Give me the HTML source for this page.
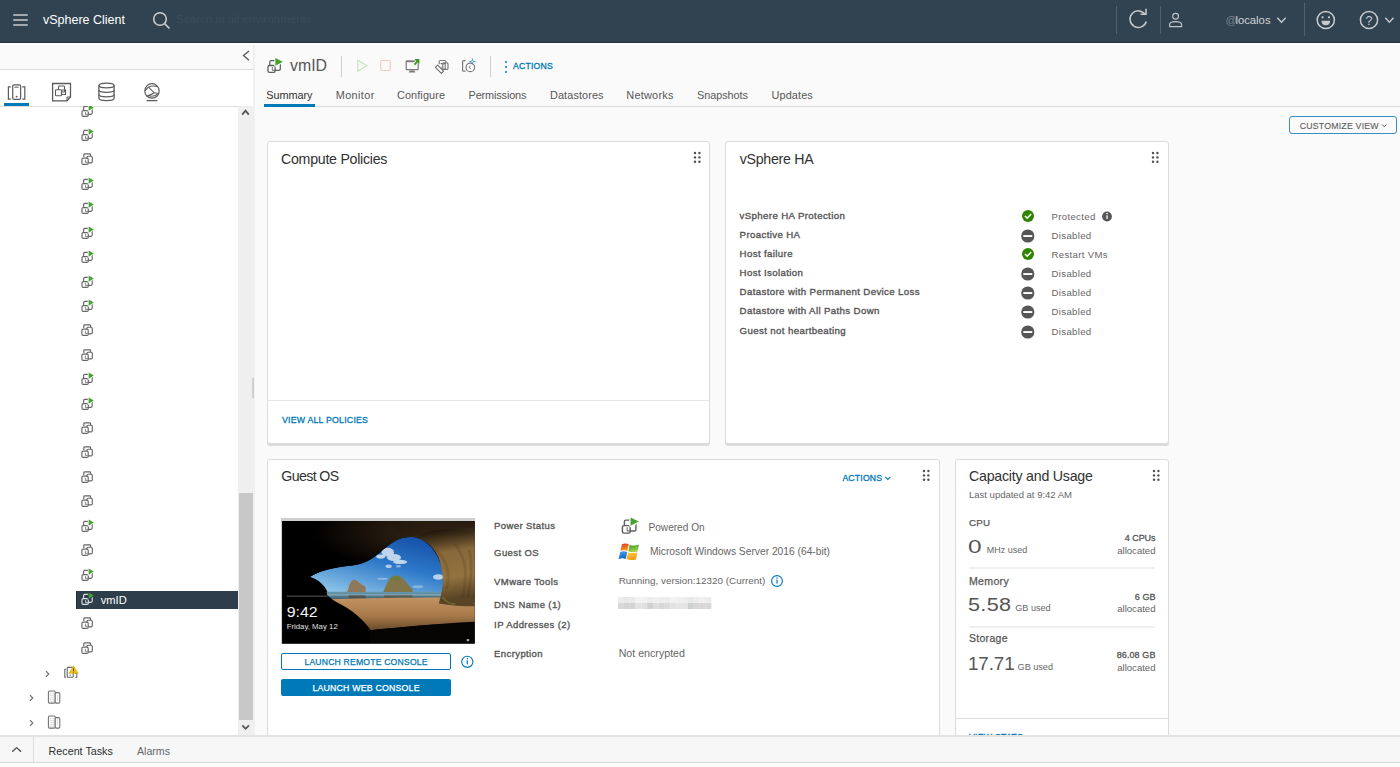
<!DOCTYPE html><html><head><meta charset="utf-8"><style>
html,body{margin:0;padding:0;}
body{width:1400px;height:767px;overflow:hidden;position:relative;background:#fafafa;font-family:"Liberation Sans", sans-serif;}
.t{position:absolute;white-space:nowrap;line-height:normal;}
.card{position:absolute;background:#fff;border:1px solid #dcdcdc;border-radius:3px;box-shadow:0 2px 0 #dcdcdc;box-sizing:border-box;}
svg{overflow:visible}
</style></head><body>
<div style="position:absolute;left:0px;top:0px;width:1400px;height:42px;background:#314351"></div>
<div style="position:absolute;left:0px;top:42px;width:1400px;height:1px;background:#24323d"></div>
<div style="position:absolute;left:0px;top:43px;width:1400px;height:2px;background:#ffffff"></div>
<div style="position:absolute;left:13.3px;top:14.1px;width:14.7px;height:1.8px;background:#a3a9ae;border-radius:1px"></div>
<div style="position:absolute;left:13.3px;top:19px;width:14.7px;height:1.8px;background:#a3a9ae;border-radius:1px"></div>
<div style="position:absolute;left:13.3px;top:23.9px;width:14.7px;height:1.8px;background:#a3a9ae;border-radius:1px"></div>
<div class="t" style="left:43px;top:12.69px;font-size:12.5px;color:#ffffff;font-weight:400;">vSphere Client</div>
<svg style="position:absolute;left:150px;top:10px;" width="24" height="24" viewBox="150 10 24 24"><circle cx="160" cy="19" r="6.3" fill="none" stroke="#c7cbce" stroke-width="1.6"/><line x1="164.6" y1="23.6" x2="169.5" y2="28.5" stroke="#c7cbce" stroke-width="1.7"/></svg>
<div class="t" style="left:176px;top:12.79px;font-size:11.5px;color:#3b4b57;font-weight:400;">Search in all environments</div>
<div style="position:absolute;left:1116px;top:6px;width:1px;height:28px;background:#51616d"></div>
<div style="position:absolute;left:1160px;top:6px;width:1px;height:28px;background:#51616d"></div>
<div style="position:absolute;left:1303.5px;top:3px;width:1px;height:33px;background:#51616d"></div>
<svg style="position:absolute;left:1126px;top:8px;" width="24" height="24" viewBox="1126 8 24 24"><path d="M1145.2 14.5 A8.3 8.3 0 1 0 1146.3 21.5" fill="none" stroke="#c7cbce" stroke-width="1.5"/><path d="M1140.5 14.2 L1146 14.2 L1146 8.8" fill="none" stroke="#c7cbce" stroke-width="1.5"/></svg>
<svg style="position:absolute;left:1166px;top:10px;" width="20" height="20" viewBox="1166 10 20 20"><circle cx="1175.6" cy="16.2" r="2.9" fill="none" stroke="#c0c5c9" stroke-width="1.15"/><path d="M1169.6 26.6 L1169.6 24.6 Q1169.6 21.6 1175.6 21.6 Q1181.6 21.6 1181.6 24.6 L1181.6 26.6 Z" fill="none" stroke="#c0c5c9" stroke-width="1.15" stroke-linejoin="round"/></svg>
<div class="t" style="left:1225.5px;top:13.97px;font-size:11.3px;color:#d0d4d8;font-weight:400;"><span style="color:#74818b;letter-spacing:-1.6px">@</span>localos</div>
<svg style="position:absolute;left:1276px;top:15px;" width="12" height="10" viewBox="1276 15 12 10"><path d="M1277.3 17.8 L1281.5 22.2 L1285.7 17.8" fill="none" stroke="#c7cbce" stroke-width="1.4"/></svg>
<svg style="position:absolute;left:1314px;top:8px;" width="24" height="24" viewBox="1314 8 24 24"><circle cx="1325.8" cy="20" r="8.6" fill="none" stroke="#c7cbce" stroke-width="1.5"/><circle cx="1322.6" cy="17.3" r="1.1" fill="#c7cbce"/><circle cx="1329" cy="17.3" r="1.1" fill="#c7cbce"/><path d="M1321.5 20.8 L1330.1 20.8 Q1330 25.3 1325.8 25.3 Q1321.6 25.3 1321.5 20.8 Z" fill="#c7cbce"/></svg>
<svg style="position:absolute;left:1357px;top:8px;" width="40" height="24" viewBox="1357 8 40 24"><circle cx="1369" cy="20" r="8.6" fill="none" stroke="#c7cbce" stroke-width="1.5"/><text x="1369" y="24.6" font-size="12.5" text-anchor="middle" fill="#c7cbce" font-family="Liberation Sans">?</text><path d="M1385.3 17.8 L1389.4 22.2 L1393.5 17.8" fill="none" stroke="#c7cbce" stroke-width="1.4"/></svg>
<div style="position:absolute;left:0px;top:45px;width:253px;height:24px;background:#fafafa"></div>
<svg style="position:absolute;left:240px;top:48px;" width="12" height="16" viewBox="240 48 12 16"><path d="M249 51 L243.5 55.6 L249 60.2" fill="none" stroke="#555" stroke-width="1.3"/></svg>
<div style="position:absolute;left:0px;top:69px;width:253px;height:1px;background:#dddddd"></div>
<div style="position:absolute;left:0px;top:70px;width:253px;height:665px;background:#ffffff"></div>
<svg style="position:absolute;left:5px;top:81px;" width="24" height="22" viewBox="5 81 24 22"><rect x="12.7" y="84.8" width="7.9" height="14.5" rx="1.3" fill="none" stroke="#5b5b5b" stroke-width="1.2"/><path d="M14.4 87.2 L18.6 87.2" stroke="#5b5b5b" stroke-width="1"/><circle cx="16.6" cy="96.6" r="0.95" fill="#5b5b5b"/><path d="M10.8 86.9 L8.4 86.9 L8.4 99.2 L10.8 99.2 M22.3 86.9 L24.8 86.9 L24.8 99.2 L22.3 99.2" fill="none" stroke="#5b5b5b" stroke-width="1.2"/></svg>
<svg style="position:absolute;left:50px;top:81px;" width="24" height="22" viewBox="50 81 24 22"><path d="M52.6 83.5 L70.5 83.5 L70.5 97 L67 100.8 L52.6 100.8 Z" fill="none" stroke="#5b5b5b" stroke-width="1.3"/><path d="M67 100.8 L67 97 L70.5 97" fill="none" stroke="#5b5b5b" stroke-width="1"/><rect x="58.5" y="86" width="6" height="6" rx="0.8" fill="none" stroke="#5b5b5b" stroke-width="1.1"/><rect x="55.5" y="89.8" width="6" height="6" rx="0.8" fill="#fff" stroke="#5b5b5b" stroke-width="1.1"/><path d="M62 90 L65.5 90 L65.5 94.5 L61.5 94.5" fill="none" stroke="#5b5b5b" stroke-width="1.1"/></svg>
<svg style="position:absolute;left:96px;top:81px;" width="22" height="22" viewBox="96 81 22 22"><ellipse cx="106.5" cy="85.5" rx="7.6" ry="2.3" fill="none" stroke="#5b5b5b" stroke-width="1.3"/><path d="M98.9 85.5 L98.9 98.3 Q98.9 100.6 106.5 100.6 Q114.1 100.6 114.1 98.3 L114.1 85.5" fill="none" stroke="#5b5b5b" stroke-width="1.3"/><path d="M98.9 90 Q98.9 92.3 106.5 92.3 Q114.1 92.3 114.1 90 M98.9 94.5 Q98.9 96.8 106.5 96.8 Q114.1 96.8 114.1 94.5" fill="none" stroke="#5b5b5b" stroke-width="1.2"/></svg>
<svg style="position:absolute;left:142px;top:81px;" width="22" height="22" viewBox="142 81 22 22"><circle cx="152" cy="90.9" r="7.2" fill="none" stroke="#5b5b5b" stroke-width="1.2"/><path d="M148.4 87.2 L154.4 92.8 L158.8 93.5 M148.4 87.2 Q152.6 85 157.2 86.6 M148.4 87.2 L145.2 90.6 M154.4 92.8 Q151.4 94.8 148.2 95.4 L146.4 96.4 M148.2 95.4 Q153.6 97.6 158.4 93.6" fill="none" stroke="#5b5b5b" stroke-width="1.05"/><line x1="146.6" y1="100.6" x2="157.3" y2="100.6" stroke="#5b5b5b" stroke-width="1.3"/></svg>
<div style="position:absolute;left:3.5px;top:103px;width:25.5px;height:2.6px;background:#0079b8"></div>
<div style="position:absolute;left:0px;top:105.5px;width:239px;height:1px;background:#dddddd"></div>
<div style="position:absolute;left:0;top:106px;width:239px;height:629px;overflow:hidden">
<div style="position:absolute;left:0;top:-106px;width:239px;height:767px">
<svg style="position:absolute;left:81px;top:103.7px;" width="14" height="14" viewBox="0 0 14 14"><rect x="2.6" y="2.4" width="8.6" height="7.9" rx="1.2" fill="none" stroke="#666666" stroke-width="1.15"/><rect x="1.0" y="6.6" width="6.3" height="5.8" rx="1.2" fill="#ffffff" stroke="#666666" stroke-width="1.15"/><path d="M4.6 8 L4.6 10.6 L7 10.6" fill="none" stroke="#666666" stroke-width="0.8"/><path d="M7.6 0.5 L12.8 3.4 L7.6 6.7 Z" fill="#ffffff" stroke="#ffffff" stroke-width="1.6" stroke-linejoin="round"/><path d="M7.6 0.5 L12.8 3.4 L7.6 6.7 Z" fill="#45a22f"/></svg>
<svg style="position:absolute;left:81px;top:128.12px;" width="14" height="14" viewBox="0 0 14 14"><rect x="2.6" y="2.4" width="8.6" height="7.9" rx="1.2" fill="none" stroke="#666666" stroke-width="1.15"/><rect x="1.0" y="6.6" width="6.3" height="5.8" rx="1.2" fill="#ffffff" stroke="#666666" stroke-width="1.15"/><path d="M4.6 8 L4.6 10.6 L7 10.6" fill="none" stroke="#666666" stroke-width="0.8"/><path d="M7.6 0.5 L12.8 3.4 L7.6 6.7 Z" fill="#ffffff" stroke="#ffffff" stroke-width="1.6" stroke-linejoin="round"/><path d="M7.6 0.5 L12.8 3.4 L7.6 6.7 Z" fill="#45a22f"/></svg>
<svg style="position:absolute;left:81px;top:152.14000000000001px;" width="14" height="14" viewBox="0 0 14 14"><path d="M2.8 5 L2.8 2.8 Q2.8 1.9 3.7 1.9 L8.8 1.9 Q9.6 1.9 9.6 2.8 L9.6 4" fill="none" stroke="#666666" stroke-width="1.15"/><rect x="5.9" y="4.2" width="5.4" height="6.7" rx="1.2" fill="#ffffff" stroke="#666666" stroke-width="1.15"/><rect x="0.9" y="6.1" width="6.3" height="6.3" rx="1.2" fill="#ffffff" stroke="#666666" stroke-width="1.15"/><path d="M4.4 7.8 L4.4 10.4 L6.6 10.4" fill="none" stroke="#666666" stroke-width="0.8"/></svg>
<svg style="position:absolute;left:81px;top:176.95999999999998px;" width="14" height="14" viewBox="0 0 14 14"><rect x="2.6" y="2.4" width="8.6" height="7.9" rx="1.2" fill="none" stroke="#666666" stroke-width="1.15"/><rect x="1.0" y="6.6" width="6.3" height="5.8" rx="1.2" fill="#ffffff" stroke="#666666" stroke-width="1.15"/><path d="M4.6 8 L4.6 10.6 L7 10.6" fill="none" stroke="#666666" stroke-width="0.8"/><path d="M7.6 0.5 L12.8 3.4 L7.6 6.7 Z" fill="#ffffff" stroke="#ffffff" stroke-width="1.6" stroke-linejoin="round"/><path d="M7.6 0.5 L12.8 3.4 L7.6 6.7 Z" fill="#45a22f"/></svg>
<svg style="position:absolute;left:81px;top:201.38px;" width="14" height="14" viewBox="0 0 14 14"><rect x="2.6" y="2.4" width="8.6" height="7.9" rx="1.2" fill="none" stroke="#666666" stroke-width="1.15"/><rect x="1.0" y="6.6" width="6.3" height="5.8" rx="1.2" fill="#ffffff" stroke="#666666" stroke-width="1.15"/><path d="M4.6 8 L4.6 10.6 L7 10.6" fill="none" stroke="#666666" stroke-width="0.8"/><path d="M7.6 0.5 L12.8 3.4 L7.6 6.7 Z" fill="#ffffff" stroke="#ffffff" stroke-width="1.6" stroke-linejoin="round"/><path d="M7.6 0.5 L12.8 3.4 L7.6 6.7 Z" fill="#45a22f"/></svg>
<svg style="position:absolute;left:81px;top:225.8px;" width="14" height="14" viewBox="0 0 14 14"><rect x="2.6" y="2.4" width="8.6" height="7.9" rx="1.2" fill="none" stroke="#666666" stroke-width="1.15"/><rect x="1.0" y="6.6" width="6.3" height="5.8" rx="1.2" fill="#ffffff" stroke="#666666" stroke-width="1.15"/><path d="M4.6 8 L4.6 10.6 L7 10.6" fill="none" stroke="#666666" stroke-width="0.8"/><path d="M7.6 0.5 L12.8 3.4 L7.6 6.7 Z" fill="#ffffff" stroke="#ffffff" stroke-width="1.6" stroke-linejoin="round"/><path d="M7.6 0.5 L12.8 3.4 L7.6 6.7 Z" fill="#45a22f"/></svg>
<svg style="position:absolute;left:81px;top:250.21999999999997px;" width="14" height="14" viewBox="0 0 14 14"><rect x="2.6" y="2.4" width="8.6" height="7.9" rx="1.2" fill="none" stroke="#666666" stroke-width="1.15"/><rect x="1.0" y="6.6" width="6.3" height="5.8" rx="1.2" fill="#ffffff" stroke="#666666" stroke-width="1.15"/><path d="M4.6 8 L4.6 10.6 L7 10.6" fill="none" stroke="#666666" stroke-width="0.8"/><path d="M7.6 0.5 L12.8 3.4 L7.6 6.7 Z" fill="#ffffff" stroke="#ffffff" stroke-width="1.6" stroke-linejoin="round"/><path d="M7.6 0.5 L12.8 3.4 L7.6 6.7 Z" fill="#45a22f"/></svg>
<svg style="position:absolute;left:81px;top:274.64px;" width="14" height="14" viewBox="0 0 14 14"><rect x="2.6" y="2.4" width="8.6" height="7.9" rx="1.2" fill="none" stroke="#666666" stroke-width="1.15"/><rect x="1.0" y="6.6" width="6.3" height="5.8" rx="1.2" fill="#ffffff" stroke="#666666" stroke-width="1.15"/><path d="M4.6 8 L4.6 10.6 L7 10.6" fill="none" stroke="#666666" stroke-width="0.8"/><path d="M7.6 0.5 L12.8 3.4 L7.6 6.7 Z" fill="#ffffff" stroke="#ffffff" stroke-width="1.6" stroke-linejoin="round"/><path d="M7.6 0.5 L12.8 3.4 L7.6 6.7 Z" fill="#45a22f"/></svg>
<svg style="position:absolute;left:81px;top:299.06px;" width="14" height="14" viewBox="0 0 14 14"><rect x="2.6" y="2.4" width="8.6" height="7.9" rx="1.2" fill="none" stroke="#666666" stroke-width="1.15"/><rect x="1.0" y="6.6" width="6.3" height="5.8" rx="1.2" fill="#ffffff" stroke="#666666" stroke-width="1.15"/><path d="M4.6 8 L4.6 10.6 L7 10.6" fill="none" stroke="#666666" stroke-width="0.8"/><path d="M7.6 0.5 L12.8 3.4 L7.6 6.7 Z" fill="#ffffff" stroke="#ffffff" stroke-width="1.6" stroke-linejoin="round"/><path d="M7.6 0.5 L12.8 3.4 L7.6 6.7 Z" fill="#45a22f"/></svg>
<svg style="position:absolute;left:81px;top:323.08000000000004px;" width="14" height="14" viewBox="0 0 14 14"><path d="M2.8 5 L2.8 2.8 Q2.8 1.9 3.7 1.9 L8.8 1.9 Q9.6 1.9 9.6 2.8 L9.6 4" fill="none" stroke="#666666" stroke-width="1.15"/><rect x="5.9" y="4.2" width="5.4" height="6.7" rx="1.2" fill="#ffffff" stroke="#666666" stroke-width="1.15"/><rect x="0.9" y="6.1" width="6.3" height="6.3" rx="1.2" fill="#ffffff" stroke="#666666" stroke-width="1.15"/><path d="M4.4 7.8 L4.4 10.4 L6.6 10.4" fill="none" stroke="#666666" stroke-width="0.8"/></svg>
<svg style="position:absolute;left:81px;top:347.50000000000006px;" width="14" height="14" viewBox="0 0 14 14"><path d="M2.8 5 L2.8 2.8 Q2.8 1.9 3.7 1.9 L8.8 1.9 Q9.6 1.9 9.6 2.8 L9.6 4" fill="none" stroke="#666666" stroke-width="1.15"/><rect x="5.9" y="4.2" width="5.4" height="6.7" rx="1.2" fill="#ffffff" stroke="#666666" stroke-width="1.15"/><rect x="0.9" y="6.1" width="6.3" height="6.3" rx="1.2" fill="#ffffff" stroke="#666666" stroke-width="1.15"/><path d="M4.4 7.8 L4.4 10.4 L6.6 10.4" fill="none" stroke="#666666" stroke-width="0.8"/></svg>
<svg style="position:absolute;left:81px;top:372.32px;" width="14" height="14" viewBox="0 0 14 14"><rect x="2.6" y="2.4" width="8.6" height="7.9" rx="1.2" fill="none" stroke="#666666" stroke-width="1.15"/><rect x="1.0" y="6.6" width="6.3" height="5.8" rx="1.2" fill="#ffffff" stroke="#666666" stroke-width="1.15"/><path d="M4.6 8 L4.6 10.6 L7 10.6" fill="none" stroke="#666666" stroke-width="0.8"/><path d="M7.6 0.5 L12.8 3.4 L7.6 6.7 Z" fill="#ffffff" stroke="#ffffff" stroke-width="1.6" stroke-linejoin="round"/><path d="M7.6 0.5 L12.8 3.4 L7.6 6.7 Z" fill="#45a22f"/></svg>
<svg style="position:absolute;left:81px;top:396.74px;" width="14" height="14" viewBox="0 0 14 14"><rect x="2.6" y="2.4" width="8.6" height="7.9" rx="1.2" fill="none" stroke="#666666" stroke-width="1.15"/><rect x="1.0" y="6.6" width="6.3" height="5.8" rx="1.2" fill="#ffffff" stroke="#666666" stroke-width="1.15"/><path d="M4.6 8 L4.6 10.6 L7 10.6" fill="none" stroke="#666666" stroke-width="0.8"/><path d="M7.6 0.5 L12.8 3.4 L7.6 6.7 Z" fill="#ffffff" stroke="#ffffff" stroke-width="1.6" stroke-linejoin="round"/><path d="M7.6 0.5 L12.8 3.4 L7.6 6.7 Z" fill="#45a22f"/></svg>
<svg style="position:absolute;left:81px;top:420.76000000000005px;" width="14" height="14" viewBox="0 0 14 14"><path d="M2.8 5 L2.8 2.8 Q2.8 1.9 3.7 1.9 L8.8 1.9 Q9.6 1.9 9.6 2.8 L9.6 4" fill="none" stroke="#666666" stroke-width="1.15"/><rect x="5.9" y="4.2" width="5.4" height="6.7" rx="1.2" fill="#ffffff" stroke="#666666" stroke-width="1.15"/><rect x="0.9" y="6.1" width="6.3" height="6.3" rx="1.2" fill="#ffffff" stroke="#666666" stroke-width="1.15"/><path d="M4.4 7.8 L4.4 10.4 L6.6 10.4" fill="none" stroke="#666666" stroke-width="0.8"/></svg>
<svg style="position:absolute;left:81px;top:445.18px;" width="14" height="14" viewBox="0 0 14 14"><path d="M2.8 5 L2.8 2.8 Q2.8 1.9 3.7 1.9 L8.8 1.9 Q9.6 1.9 9.6 2.8 L9.6 4" fill="none" stroke="#666666" stroke-width="1.15"/><rect x="5.9" y="4.2" width="5.4" height="6.7" rx="1.2" fill="#ffffff" stroke="#666666" stroke-width="1.15"/><rect x="0.9" y="6.1" width="6.3" height="6.3" rx="1.2" fill="#ffffff" stroke="#666666" stroke-width="1.15"/><path d="M4.4 7.8 L4.4 10.4 L6.6 10.4" fill="none" stroke="#666666" stroke-width="0.8"/></svg>
<svg style="position:absolute;left:81px;top:469.6px;" width="14" height="14" viewBox="0 0 14 14"><path d="M2.8 5 L2.8 2.8 Q2.8 1.9 3.7 1.9 L8.8 1.9 Q9.6 1.9 9.6 2.8 L9.6 4" fill="none" stroke="#666666" stroke-width="1.15"/><rect x="5.9" y="4.2" width="5.4" height="6.7" rx="1.2" fill="#ffffff" stroke="#666666" stroke-width="1.15"/><rect x="0.9" y="6.1" width="6.3" height="6.3" rx="1.2" fill="#ffffff" stroke="#666666" stroke-width="1.15"/><path d="M4.4 7.8 L4.4 10.4 L6.6 10.4" fill="none" stroke="#666666" stroke-width="0.8"/></svg>
<svg style="position:absolute;left:81px;top:494.02000000000004px;" width="14" height="14" viewBox="0 0 14 14"><path d="M2.8 5 L2.8 2.8 Q2.8 1.9 3.7 1.9 L8.8 1.9 Q9.6 1.9 9.6 2.8 L9.6 4" fill="none" stroke="#666666" stroke-width="1.15"/><rect x="5.9" y="4.2" width="5.4" height="6.7" rx="1.2" fill="#ffffff" stroke="#666666" stroke-width="1.15"/><rect x="0.9" y="6.1" width="6.3" height="6.3" rx="1.2" fill="#ffffff" stroke="#666666" stroke-width="1.15"/><path d="M4.4 7.8 L4.4 10.4 L6.6 10.4" fill="none" stroke="#666666" stroke-width="0.8"/></svg>
<svg style="position:absolute;left:81px;top:518.8400000000001px;" width="14" height="14" viewBox="0 0 14 14"><rect x="2.6" y="2.4" width="8.6" height="7.9" rx="1.2" fill="none" stroke="#666666" stroke-width="1.15"/><rect x="1.0" y="6.6" width="6.3" height="5.8" rx="1.2" fill="#ffffff" stroke="#666666" stroke-width="1.15"/><path d="M4.6 8 L4.6 10.6 L7 10.6" fill="none" stroke="#666666" stroke-width="0.8"/><path d="M7.6 0.5 L12.8 3.4 L7.6 6.7 Z" fill="#ffffff" stroke="#ffffff" stroke-width="1.6" stroke-linejoin="round"/><path d="M7.6 0.5 L12.8 3.4 L7.6 6.7 Z" fill="#45a22f"/></svg>
<svg style="position:absolute;left:81px;top:542.86px;" width="14" height="14" viewBox="0 0 14 14"><path d="M2.8 5 L2.8 2.8 Q2.8 1.9 3.7 1.9 L8.8 1.9 Q9.6 1.9 9.6 2.8 L9.6 4" fill="none" stroke="#666666" stroke-width="1.15"/><rect x="5.9" y="4.2" width="5.4" height="6.7" rx="1.2" fill="#ffffff" stroke="#666666" stroke-width="1.15"/><rect x="0.9" y="6.1" width="6.3" height="6.3" rx="1.2" fill="#ffffff" stroke="#666666" stroke-width="1.15"/><path d="M4.4 7.8 L4.4 10.4 L6.6 10.4" fill="none" stroke="#666666" stroke-width="0.8"/></svg>
<svg style="position:absolute;left:81px;top:567.6800000000001px;" width="14" height="14" viewBox="0 0 14 14"><rect x="2.6" y="2.4" width="8.6" height="7.9" rx="1.2" fill="none" stroke="#666666" stroke-width="1.15"/><rect x="1.0" y="6.6" width="6.3" height="5.8" rx="1.2" fill="#ffffff" stroke="#666666" stroke-width="1.15"/><path d="M4.6 8 L4.6 10.6 L7 10.6" fill="none" stroke="#666666" stroke-width="0.8"/><path d="M7.6 0.5 L12.8 3.4 L7.6 6.7 Z" fill="#ffffff" stroke="#ffffff" stroke-width="1.6" stroke-linejoin="round"/><path d="M7.6 0.5 L12.8 3.4 L7.6 6.7 Z" fill="#45a22f"/></svg>
<div style="position:absolute;left:76.25px;top:591.4000000000001px;width:162px;height:17.8px;background:#2e3f4b;box-shadow:inset 1px 0 0 #1f2e38"></div>
<svg style="position:absolute;left:81px;top:592.1000000000001px;" width="14" height="14" viewBox="0 0 14 14"><rect x="2.6" y="2.4" width="8.6" height="7.9" rx="1.2" fill="none" stroke="#dfe3e6" stroke-width="1.15"/><rect x="1.0" y="6.6" width="6.3" height="5.8" rx="1.2" fill="#2e3f4b" stroke="#dfe3e6" stroke-width="1.15"/><path d="M4.6 8 L4.6 10.6 L7 10.6" fill="none" stroke="#dfe3e6" stroke-width="0.8"/><path d="M7.6 0.5 L12.8 3.4 L7.6 6.7 Z" fill="#2e3f4b" stroke="#2e3f4b" stroke-width="1.6" stroke-linejoin="round"/><path d="M7.6 0.5 L12.8 3.4 L7.6 6.7 Z" fill="#45a22f"/></svg>
<div class="t" style="left:100.8px;top:593.85px;font-size:11.1px;color:#ffffff;font-weight:400;">vmID</div>
<svg style="position:absolute;left:81px;top:616.12px;" width="14" height="14" viewBox="0 0 14 14"><path d="M2.8 5 L2.8 2.8 Q2.8 1.9 3.7 1.9 L8.8 1.9 Q9.6 1.9 9.6 2.8 L9.6 4" fill="none" stroke="#666666" stroke-width="1.15"/><rect x="5.9" y="4.2" width="5.4" height="6.7" rx="1.2" fill="#ffffff" stroke="#666666" stroke-width="1.15"/><rect x="0.9" y="6.1" width="6.3" height="6.3" rx="1.2" fill="#ffffff" stroke="#666666" stroke-width="1.15"/><path d="M4.4 7.8 L4.4 10.4 L6.6 10.4" fill="none" stroke="#666666" stroke-width="0.8"/></svg>
<svg style="position:absolute;left:81px;top:640.54px;" width="14" height="14" viewBox="0 0 14 14"><path d="M2.8 5 L2.8 2.8 Q2.8 1.9 3.7 1.9 L8.8 1.9 Q9.6 1.9 9.6 2.8 L9.6 4" fill="none" stroke="#666666" stroke-width="1.15"/><rect x="5.9" y="4.2" width="5.4" height="6.7" rx="1.2" fill="#ffffff" stroke="#666666" stroke-width="1.15"/><rect x="0.9" y="6.1" width="6.3" height="6.3" rx="1.2" fill="#ffffff" stroke="#666666" stroke-width="1.15"/><path d="M4.4 7.8 L4.4 10.4 L6.6 10.4" fill="none" stroke="#666666" stroke-width="0.8"/></svg>
</div></div>
<svg style="position:absolute;left:45.2px;top:669.9px;" width="6" height="8" viewBox="45.2 669.9 6 8"><path d="M46.2 671.1 L49.0 673.9 L46.2 676.6999999999999" fill="none" stroke="#707070" stroke-width="1.2"/></svg>
<svg style="position:absolute;left:62px;top:664px;" width="18" height="16" viewBox="62 664 18 16"><path d="M66 669.2 L64.8 669.2 L64.8 677.3 L66 677.3" fill="none" stroke="#6a6a6a" stroke-width="1.1"/><rect x="67.2" y="667.4" width="6" height="9.9" rx="0.8" fill="#fff" stroke="#6a6a6a" stroke-width="1.1"/><circle cx="70.2" cy="675.2" r="0.65" fill="#6a6a6a"/><path d="M75.3 673.5 L76.8 673.5 L76.8 677.3 L75.3 677.3" fill="none" stroke="#6a6a6a" stroke-width="1.1"/><path d="M73.6 665.8 L78 673.3 L69.2 673.3 Z" fill="#f3c511" stroke="#d7a806" stroke-width="0.7" stroke-linejoin="round"/><rect x="73.15" y="668.2" width="0.9" height="2.8" fill="#3a3a3a"/><rect x="73.15" y="671.6" width="0.9" height="0.9" fill="#3a3a3a"/></svg>
<svg style="position:absolute;left:29.2px;top:693.9px;" width="6" height="8" viewBox="29.2 693.9 6 8"><path d="M30.2 695.1 L33.0 697.9 L30.2 700.6999999999999" fill="none" stroke="#707070" stroke-width="1.2"/></svg>
<svg style="position:absolute;left:46px;top:688.6px;" width="16" height="16" viewBox="46 688.6 16 16"><rect x="48.4" y="690.6" width="6.8" height="12.1" rx="1.2" fill="#fff" stroke="#707070" stroke-width="1.05"/><rect x="55.2" y="692.2" width="4.6" height="10.5" rx="1.2" fill="#fff" stroke="#707070" stroke-width="1.05"/><path d="M50.3 692.6 L50.3 700.6 M52 692.6 L52 700.6 M53.6 692.6 L53.6 700.6 M57.5 694.0 L57.5 700.6" stroke="#c4c4c4" stroke-width="0.7" stroke-dasharray="1.2 0.8"/><path d="M49.5 700.8000000000001 L54.5 700.8000000000001" stroke="#c4c4c4" stroke-width="0.6"/></svg>
<svg style="position:absolute;left:29.2px;top:718.9px;" width="6" height="8" viewBox="29.2 718.9 6 8"><path d="M30.2 720.1 L33.0 722.9 L30.2 725.6999999999999" fill="none" stroke="#707070" stroke-width="1.2"/></svg>
<svg style="position:absolute;left:46px;top:713.6px;" width="16" height="16" viewBox="46 713.6 16 16"><rect x="48.4" y="715.6" width="6.8" height="12.1" rx="1.2" fill="#fff" stroke="#707070" stroke-width="1.05"/><rect x="55.2" y="717.2" width="4.6" height="10.5" rx="1.2" fill="#fff" stroke="#707070" stroke-width="1.05"/><path d="M50.3 717.6 L50.3 725.6 M52 717.6 L52 725.6 M53.6 717.6 L53.6 725.6 M57.5 719.0 L57.5 725.6" stroke="#c4c4c4" stroke-width="0.7" stroke-dasharray="1.2 0.8"/><path d="M49.5 725.8000000000001 L54.5 725.8000000000001" stroke="#c4c4c4" stroke-width="0.6"/></svg>
<div style="position:absolute;left:238px;top:106px;width:15px;height:629px;background:#efefef"></div>
<div style="position:absolute;left:238.5px;top:492.5px;width:14px;height:227.5px;background:#c8c8c8"></div>
<svg style="position:absolute;left:239px;top:106px;" width="14" height="12" viewBox="239 106 14 12"><path d="M242.2 114.6 L245.5 110.6 L248.8 114.6" fill="none" stroke="#555" stroke-width="1.8"/></svg>
<svg style="position:absolute;left:239px;top:722px;" width="14" height="12" viewBox="239 722 14 12"><path d="M242.3 725.3 L245.6 728.8 L248.9 725.3" fill="none" stroke="#555" stroke-width="1.7"/></svg>
<div style="position:absolute;left:253px;top:45px;width:2px;height:690px;background:#f0f0f0"></div>
<div style="position:absolute;left:252px;top:378px;width:2px;height:20px;background:#cfcfcf"></div>
<svg style="position:absolute;left:264px;top:54px;" width="24.0" height="24.0" viewBox="0 0 24.0 24.0"><g transform="scale(1.0)"><rect x="5.8" y="6.5" width="10.5" height="9.9" rx="1.4" fill="none" stroke="#5e5e5e" stroke-width="1.25"/><rect x="4.0" y="11.5" width="7.1" height="6.8" rx="1.4" fill="#ffffff" stroke="#5e5e5e" stroke-width="1.3"/><path d="M8.3 13 L8.3 16.3 L11.1 16.3" fill="none" stroke="#5e5e5e" stroke-width="0.9"/><path d="M11.4 4.1 L18.8 7.8 L11.4 11.7 Z" fill="#fafafa" stroke="#fafafa" stroke-width="2.2" stroke-linejoin="round"/><path d="M11.4 4.1 L18.8 7.8 L11.4 11.7 Z" fill="#45a22f"/></g></svg>
<div class="t" style="left:290px;top:57.11px;font-size:15.9px;color:#565656;font-weight:400;">vmID</div>
<div style="position:absolute;left:341px;top:56px;width:1px;height:21px;background:#cfcfcf"></div>
<svg style="position:absolute;left:354px;top:58px;" width="16" height="16" viewBox="354 58 16 16"><path d="M357.8 60.3 L367 65.8 L357.8 71.3 Z" fill="none" stroke="#c6e2b9" stroke-width="1.1"/></svg>
<svg style="position:absolute;left:378px;top:58px;" width="16" height="16" viewBox="378 58 16 16"><rect x="380.7" y="60.5" width="9.6" height="10" rx="1.2" fill="none" stroke="#f5c9c4" stroke-width="1.2"/></svg>
<svg style="position:absolute;left:403px;top:57px;" width="18" height="18" viewBox="403 57 18 18"><rect x="406.2" y="61.2" width="12" height="8.4" rx="0.6" fill="none" stroke="#7a7a7a" stroke-width="1.2"/><rect x="406" y="60.6" width="8" height="1.6" fill="#7a7a7a"/><path d="M408.6 72.6 L409.6 70.6 L414.4 70.6 L415.4 72.6 Z" fill="#7a7a7a"/><path d="M414.6 64.6 L418.2 60.4" stroke="#fafafa" stroke-width="3.2"/><path d="M414.6 64.6 L418.2 60.4" stroke="#3c9a1c" stroke-width="1.9"/><path d="M414.3 59.0 L419.4 59.0 L419.4 64.0 Z" fill="#3c9a1c"/></svg>
<svg style="position:absolute;left:433px;top:57px;" width="18" height="18" viewBox="433 57 18 18"><path d="M439.2 64.2 L439.2 61.6 Q439.2 60.5 440.3 60.5 L444.8 60.5 Q445.9 60.5 445.9 61.6 L445.9 62.6" fill="none" stroke="#7a7a7a" stroke-width="1.15"/><rect x="442.8" y="62.9" width="5.2" height="6.4" rx="1" fill="#fafafa" stroke="#7a7a7a" stroke-width="1.15"/><path d="M440.6 63.6 L445.2 63.6 L445.2 69.2 L441.6 69.2" fill="none" stroke="#7a7a7a" stroke-width="1.1"/><path d="M435.4 67.4 L437.6 65.2 L443.6 71.2 L441.4 73.4 Z" fill="#fafafa" stroke="#6e6e6e" stroke-width="1.1" stroke-linejoin="round"/><path d="M441.2 66.8 L441.2 68.6" stroke="#7a7a7a" stroke-width="0.9"/></svg>
<svg style="position:absolute;left:460px;top:56px;" width="20" height="20" viewBox="460 56 20 20"><path d="M465.6 60.6 L463.6 60.6 Q462.6 60.6 462.6 61.6 L462.6 70.2 Q462.6 71.2 463.6 71.2 L465.4 71.2" fill="none" stroke="#7a7a7a" stroke-width="1.2"/><circle cx="470.3" cy="67.4" r="4.3" fill="#fafafa" stroke="#7a7a7a" stroke-width="1.2"/><path d="M470.6 65.6 L469.2 67.3 L470.6 69" fill="none" stroke="#7a7a7a" stroke-width="1"/><path d="M472.4 57.8 L473.2 60.7 L476.1 61.5 L473.2 62.3 L472.4 65.2 L471.6 62.3 L468.7 61.5 L471.6 60.7 Z" fill="#1a8fd6"/><circle cx="472.4" cy="61.5" r="0.9" fill="#fafafa"/></svg>
<div style="position:absolute;left:489.5px;top:56px;width:1px;height:21px;background:#cfcfcf"></div>
<div style="position:absolute;left:505px;top:61px;width:2px;height:2px;background:#0079b8;border-radius:1px"></div>
<div style="position:absolute;left:505px;top:65.8px;width:2px;height:2px;background:#0079b8;border-radius:1px"></div>
<div style="position:absolute;left:505px;top:70.6px;width:2px;height:2px;background:#0079b8;border-radius:1px"></div>
<div class="t" style="left:513px;top:61.26px;font-size:8.66px;color:#0079b8;font-weight:400;letter-spacing:0.2px;-webkit-text-stroke:0.3px currentColor">ACTIONS</div>
<div class="t" style="left:266.3px;top:89.34px;font-size:10.9px;color:#333333;font-weight:400;letter-spacing:-0.056px;">Summary</div>
<div class="t" style="left:335.7px;top:89.34px;font-size:10.9px;color:#575757;font-weight:400;letter-spacing:0.376px;">Monitor</div>
<div class="t" style="left:397px;top:89.34px;font-size:10.9px;color:#575757;font-weight:400;letter-spacing:0.092px;">Configure</div>
<div class="t" style="left:468.6px;top:89.34px;font-size:10.9px;color:#575757;font-weight:400;letter-spacing:-0.146px;">Permissions</div>
<div class="t" style="left:550px;top:89.34px;font-size:10.9px;color:#575757;font-weight:400;letter-spacing:0.099px;">Datastores</div>
<div class="t" style="left:626.3px;top:89.34px;font-size:10.9px;color:#575757;font-weight:400;letter-spacing:0.253px;">Networks</div>
<div class="t" style="left:697px;top:89.34px;font-size:10.9px;color:#575757;font-weight:400;letter-spacing:-0.064px;">Snapshots</div>
<div class="t" style="left:771.6px;top:89.34px;font-size:10.9px;color:#575757;font-weight:400;letter-spacing:0.1px;">Updates</div>
<div style="position:absolute;left:264px;top:105.8px;width:1136px;height:1px;background:#dddddd"></div>
<div style="position:absolute;left:264px;top:104.3px;width:51px;height:2.5px;background:#0079b8"></div>
<div style="position:absolute;left:1289px;top:116px;width:108px;height:18px;border:1.3px solid #3590c8;border-radius:3px;box-sizing:border-box;background:#fafafa"></div>
<div class="t" style="left:1299.7px;top:121.15px;font-size:8.78px;color:#5a5a5a;font-weight:400;letter-spacing:0.2px;-webkit-text-stroke:0.1px currentColor">CUSTOMIZE VIEW</div>
<svg style="position:absolute;left:1381px;top:123px;" width="7" height="6" viewBox="1381 123 7 6"><path d="M1382 124.5 L1384.3 126.8 L1386.6 124.5" fill="none" stroke="#565656" stroke-width="1"/></svg>
<div class="card" style="left:267px;top:141px;width:443px;height:303px"></div>
<div class="t" style="left:281px;top:151.05px;font-size:14.2px;color:#313131;font-weight:400;letter-spacing:-0.266px;">Compute Policies</div>
<svg style="position:absolute;left:692.9px;top:151.05px;" width="10" height="14" viewBox="692.9 151.05 10 14"><circle cx="694.9" cy="153.05" r="1.22" fill="#525252"/><circle cx="699.3" cy="153.05" r="1.22" fill="#525252"/><circle cx="694.9" cy="157.45000000000002" r="1.22" fill="#525252"/><circle cx="699.3" cy="157.45000000000002" r="1.22" fill="#525252"/><circle cx="694.9" cy="161.85000000000002" r="1.22" fill="#525252"/><circle cx="699.3" cy="161.85000000000002" r="1.22" fill="#525252"/></svg>
<div style="position:absolute;left:268px;top:400px;width:441px;height:1px;background:#e6e6e6"></div>
<div class="t" style="left:282px;top:414.84px;font-size:8.8px;color:#0079b8;font-weight:400;letter-spacing:0.2px;-webkit-text-stroke:0.3px currentColor">VIEW ALL POLICIES</div>
<div class="card" style="left:725px;top:141px;width:444px;height:303px"></div>
<div class="t" style="left:739.7px;top:151.25px;font-size:14.2px;color:#313131;font-weight:400;letter-spacing:-0.285px;">vSphere HA</div>
<svg style="position:absolute;left:1151.4px;top:151.05px;" width="10" height="14" viewBox="1151.4 151.05 10 14"><circle cx="1153.4" cy="153.05" r="1.22" fill="#525252"/><circle cx="1157.8000000000002" cy="153.05" r="1.22" fill="#525252"/><circle cx="1153.4" cy="157.45000000000002" r="1.22" fill="#525252"/><circle cx="1157.8000000000002" cy="157.45000000000002" r="1.22" fill="#525252"/><circle cx="1153.4" cy="161.85000000000002" r="1.22" fill="#525252"/><circle cx="1157.8000000000002" cy="161.85000000000002" r="1.22" fill="#525252"/></svg>
<div class="t" style="left:739.6px;top:210.22px;font-size:9.7px;color:#565656;font-weight:400;letter-spacing:0.36px;-webkit-text-stroke:0.35px #565656">vSphere HA Protection</div>
<div class="t" style="left:1051.6px;top:210.91px;font-size:9.6px;color:#666666;font-weight:400;letter-spacing:0.32px;">Protected</div>
<svg style="position:absolute;left:1021px;top:208.5px;" width="14" height="14" viewBox="1021 208.5 14 14"><circle cx="1028" cy="215.5" r="6" fill="#2f8400"/><path d="M1025 215.5 L1027.2 217.7 L1031.2 213.5" fill="none" stroke="#fff" stroke-width="1.6"/></svg>
<div class="t" style="left:739.6px;top:229.22px;font-size:9.7px;color:#565656;font-weight:400;letter-spacing:0.36px;-webkit-text-stroke:0.35px #565656">Proactive HA</div>
<div class="t" style="left:1051.6px;top:229.91px;font-size:9.6px;color:#666666;font-weight:400;letter-spacing:0.32px;">Disabled</div>
<svg style="position:absolute;left:1020px;top:227.5px;" width="16" height="16" viewBox="1020 227.5 16 16"><circle cx="1027.8" cy="235.5" r="6.6" fill="#565656"/><rect x="1023.3" y="234.6" width="9" height="1.9" fill="#fff"/></svg>
<div class="t" style="left:739.6px;top:248.22px;font-size:9.7px;color:#565656;font-weight:400;letter-spacing:0.36px;-webkit-text-stroke:0.35px #565656">Host failure</div>
<div class="t" style="left:1051.6px;top:248.91px;font-size:9.6px;color:#666666;font-weight:400;letter-spacing:0.32px;">Restart VMs</div>
<svg style="position:absolute;left:1021px;top:246.5px;" width="14" height="14" viewBox="1021 246.5 14 14"><circle cx="1028" cy="253.5" r="6" fill="#2f8400"/><path d="M1025 253.5 L1027.2 255.7 L1031.2 251.5" fill="none" stroke="#fff" stroke-width="1.6"/></svg>
<div class="t" style="left:739.6px;top:267.22px;font-size:9.7px;color:#565656;font-weight:400;letter-spacing:0.36px;-webkit-text-stroke:0.35px #565656">Host Isolation</div>
<div class="t" style="left:1051.6px;top:267.91px;font-size:9.6px;color:#666666;font-weight:400;letter-spacing:0.32px;">Disabled</div>
<svg style="position:absolute;left:1020px;top:265.5px;" width="16" height="16" viewBox="1020 265.5 16 16"><circle cx="1027.8" cy="273.5" r="6.6" fill="#565656"/><rect x="1023.3" y="272.6" width="9" height="1.9" fill="#fff"/></svg>
<div class="t" style="left:739.6px;top:286.22px;font-size:9.7px;color:#565656;font-weight:400;letter-spacing:0.36px;-webkit-text-stroke:0.35px #565656">Datastore with Permanent Device Loss</div>
<div class="t" style="left:1051.6px;top:286.91px;font-size:9.6px;color:#666666;font-weight:400;letter-spacing:0.32px;">Disabled</div>
<svg style="position:absolute;left:1020px;top:284.5px;" width="16" height="16" viewBox="1020 284.5 16 16"><circle cx="1027.8" cy="292.5" r="6.6" fill="#565656"/><rect x="1023.3" y="291.6" width="9" height="1.9" fill="#fff"/></svg>
<div class="t" style="left:739.6px;top:305.22px;font-size:9.7px;color:#565656;font-weight:400;letter-spacing:0.36px;-webkit-text-stroke:0.35px #565656">Datastore with All Paths Down</div>
<div class="t" style="left:1051.6px;top:305.91px;font-size:9.6px;color:#666666;font-weight:400;letter-spacing:0.32px;">Disabled</div>
<svg style="position:absolute;left:1020px;top:303.5px;" width="16" height="16" viewBox="1020 303.5 16 16"><circle cx="1027.8" cy="311.5" r="6.6" fill="#565656"/><rect x="1023.3" y="310.6" width="9" height="1.9" fill="#fff"/></svg>
<div class="t" style="left:739.6px;top:325.22px;font-size:9.7px;color:#565656;font-weight:400;letter-spacing:0.36px;-webkit-text-stroke:0.35px #565656">Guest not heartbeating</div>
<div class="t" style="left:1051.6px;top:325.91px;font-size:9.6px;color:#666666;font-weight:400;letter-spacing:0.32px;">Disabled</div>
<svg style="position:absolute;left:1020px;top:323.5px;" width="16" height="16" viewBox="1020 323.5 16 16"><circle cx="1027.8" cy="331.5" r="6.6" fill="#565656"/><rect x="1023.3" y="330.6" width="9" height="1.9" fill="#fff"/></svg>
<svg style="position:absolute;left:1101px;top:210px;" width="12" height="12" viewBox="1101 210 12 12"><circle cx="1107" cy="216.5" r="4.9" fill="#565656"/><rect x="1106.4" y="215.3" width="1.3" height="3.6" fill="#fff"/><circle cx="1107" cy="213.6" r="0.8" fill="#fff"/></svg>
<div class="card" style="left:267px;top:459px;width:673px;height:300px"></div>
<div class="t" style="left:281.25px;top:468.35px;font-size:14.2px;color:#313131;font-weight:400;letter-spacing:-0.621px;">Guest OS</div>
<div class="t" style="left:842.4px;top:473.06px;font-size:8.66px;color:#0079b8;font-weight:400;letter-spacing:0.2px;-webkit-text-stroke:0.3px currentColor">ACTIONS</div>
<svg style="position:absolute;left:884px;top:475px;" width="8" height="6" viewBox="884 475 8 6"><path d="M885.2 476.8 L887.8 479.4 L890.4 476.8" fill="none" stroke="#0079b8" stroke-width="1.1"/></svg>
<svg style="position:absolute;left:922.1px;top:468.55px;" width="10" height="14" viewBox="922.1 468.55 10 14"><circle cx="924.1" cy="470.55" r="1.22" fill="#525252"/><circle cx="928.5" cy="470.55" r="1.22" fill="#525252"/><circle cx="924.1" cy="474.95" r="1.22" fill="#525252"/><circle cx="928.5" cy="474.95" r="1.22" fill="#525252"/><circle cx="924.1" cy="479.35" r="1.22" fill="#525252"/><circle cx="928.5" cy="479.35" r="1.22" fill="#525252"/></svg>
<div class="card" style="left:955px;top:459px;width:214px;height:300px"></div>
<div class="t" style="left:969px;top:468.35px;font-size:14.2px;color:#313131;font-weight:400;letter-spacing:-0.228px;">Capacity and Usage</div>
<svg style="position:absolute;left:1151.5px;top:468.5px;" width="10" height="14" viewBox="1151.5 468.5 10 14"><circle cx="1153.5" cy="470.5" r="1.22" fill="#525252"/><circle cx="1157.9" cy="470.5" r="1.22" fill="#525252"/><circle cx="1153.5" cy="474.9" r="1.22" fill="#525252"/><circle cx="1157.9" cy="474.9" r="1.22" fill="#525252"/><circle cx="1153.5" cy="479.3" r="1.22" fill="#525252"/><circle cx="1157.9" cy="479.3" r="1.22" fill="#525252"/></svg>
<div class="t" style="left:969px;top:489.20px;font-size:9.5px;color:#666666;font-weight:400;">Last updated at 9:42 AM</div>
<div class="t" style="left:969px;top:517.17px;font-size:9.76px;color:#565656;font-weight:400;letter-spacing:0.2px;-webkit-text-stroke:0.25px currentColor">CPU</div>
<div class="t" style="left:969px;top:535.89px;font-size:18.8px;color:#565656;font-weight:400;margin-left:-1px"><span style="display:inline-block;transform:scaleX(1.3);transform-origin:0 0">0</span></div>
<div class="t" style="left:986.7px;top:544.75px;font-size:9.0px;color:#666666;font-weight:400;">MHz used</div>
<div class="t" style="right:244.5px;top:532.65px;font-size:9.0px;color:#565656;font-weight:400;letter-spacing:-0.05px;-webkit-text-stroke:0.3px currentColor">4 CPUs</div>
<div class="t" style="right:244.5px;top:544.54px;font-size:9.57px;color:#666666;font-weight:400;">allocated</div>
<div style="position:absolute;left:969px;top:567px;width:186px;height:2px;background:#efefef"></div>
<div class="t" style="left:969px;top:574.63px;font-size:10.58px;color:#565656;font-weight:400;letter-spacing:0.3px;-webkit-text-stroke:0.25px currentColor">Memory</div>
<div class="t" style="left:968px;top:593.99px;font-size:18.8px;color:#565656;font-weight:400;"><span style="display:inline-block;transform:scaleX(1.15);transform-origin:0 0;letter-spacing:0.3px">5.58</span></div>
<div class="t" style="left:1015.3px;top:602.76px;font-size:9.1px;color:#666666;font-weight:400;">GB used</div>
<div class="t" style="right:244.5px;top:592.06px;font-size:9.0px;color:#565656;font-weight:400;letter-spacing:0.05px;-webkit-text-stroke:0.3px currentColor">6 GB</div>
<div class="t" style="right:244.5px;top:602.94px;font-size:9.57px;color:#666666;font-weight:400;">allocated</div>
<div style="position:absolute;left:969px;top:626px;width:186px;height:2px;background:#efefef"></div>
<div class="t" style="left:969px;top:633.42px;font-size:10.48px;color:#565656;font-weight:400;letter-spacing:0.3px;-webkit-text-stroke:0.25px currentColor">Storage</div>
<div class="t" style="left:968px;top:653.29px;font-size:18.8px;color:#565656;font-weight:400;letter-spacing:-0.1px;">17.71</div>
<div class="t" style="left:1017.6px;top:662.06px;font-size:9.1px;color:#666666;font-weight:400;">GB used</div>
<div class="t" style="right:244.5px;top:650.06px;font-size:9.0px;color:#565656;font-weight:400;letter-spacing:0.1px;-webkit-text-stroke:0.3px currentColor">86.08 GB</div>
<div class="t" style="right:244.5px;top:662.14px;font-size:9.57px;color:#666666;font-weight:400;">allocated</div>
<div style="position:absolute;left:956px;top:718px;width:212px;height:1px;background:#dddddd"></div>
<div class="t" style="left:969px;top:732.04px;font-size:8.8px;color:#0079b8;font-weight:400;letter-spacing:0.2px;-webkit-text-stroke:0.3px currentColor">VIEW STATS</div>
<div class="t" style="left:494.1px;top:519.90px;font-size:9.5px;color:#565656;font-weight:400;letter-spacing:0.4px;-webkit-text-stroke:0.35px #565656">Power Status</div>
<div class="t" style="left:494.1px;top:547.00px;font-size:9.5px;color:#565656;font-weight:400;letter-spacing:0.4px;-webkit-text-stroke:0.35px #565656">Guest OS</div>
<div class="t" style="left:494.1px;top:575.70px;font-size:9.5px;color:#565656;font-weight:400;letter-spacing:0.4px;-webkit-text-stroke:0.35px #565656">VMware Tools</div>
<div class="t" style="left:494.1px;top:599.40px;font-size:9.5px;color:#565656;font-weight:400;letter-spacing:0.4px;-webkit-text-stroke:0.35px #565656">DNS Name (1)</div>
<div class="t" style="left:494.1px;top:619.40px;font-size:9.5px;color:#565656;font-weight:400;letter-spacing:0.4px;-webkit-text-stroke:0.35px #565656">IP Addresses (2)</div>
<div class="t" style="left:494.1px;top:648.20px;font-size:9.5px;color:#565656;font-weight:400;letter-spacing:0.4px;-webkit-text-stroke:0.35px #565656">Encryption</div>
<svg style="position:absolute;left:617.5px;top:512.5px;" width="26.400000000000002" height="26.400000000000002" viewBox="0 0 26.400000000000002 26.400000000000002"><g transform="scale(1.1)"><rect x="5.8" y="6.5" width="10.5" height="9.9" rx="1.4" fill="none" stroke="#5e5e5e" stroke-width="1.25"/><rect x="4.0" y="11.5" width="7.1" height="6.8" rx="1.4" fill="#ffffff" stroke="#5e5e5e" stroke-width="1.3"/><path d="M8.3 13 L8.3 16.3 L11.1 16.3" fill="none" stroke="#5e5e5e" stroke-width="0.9"/><path d="M11.4 4.1 L18.8 7.8 L11.4 11.7 Z" fill="#fafafa" stroke="#fafafa" stroke-width="2.2" stroke-linejoin="round"/><path d="M11.4 4.1 L18.8 7.8 L11.4 11.7 Z" fill="#45a22f"/></g></svg>
<div class="t" style="left:648.5px;top:521.76px;font-size:10.1px;color:#666666;font-weight:400;">Powered On</div>
<svg style="position:absolute;left:618px;top:542px;" width="22" height="20" viewBox="618 542 22 20"><defs><linearGradient id="wr" x1="0" y1="0" x2="0.3" y2="1"><stop offset="0" stop-color="#d9321c"/><stop offset="1" stop-color="#f7a12b"/></linearGradient><linearGradient id="wg" x1="0" y1="0" x2="0.3" y2="1"><stop offset="0" stop-color="#3f9a2a"/><stop offset="1" stop-color="#a6d34c"/></linearGradient><linearGradient id="wb" x1="0" y1="0" x2="0.3" y2="1"><stop offset="0" stop-color="#4aa6ee"/><stop offset="1" stop-color="#1563c6"/></linearGradient><linearGradient id="wy" x1="0" y1="0" x2="0.3" y2="1"><stop offset="0" stop-color="#ffd24a"/><stop offset="1" stop-color="#f29a12"/></linearGradient></defs><path d="M621.8 544.6 Q625 542.8 628.8 544.3 L627.4 551 Q623.8 549.6 620.4 551.2 Z" fill="url(#wr)"/><path d="M629.6 544.7 Q633.5 546.4 639 544.8 L637.6 551.5 Q632.2 553.1 628.3 551.3 Z" fill="url(#wg)"/><path d="M620.1 552.2 Q623.5 550.6 627.2 552 L625.8 558.9 Q622.3 557.4 618.6 559.3 Z" fill="url(#wb)"/><path d="M628 552.2 Q632 553.9 637.4 552.4 L636 559.4 Q630.6 560.8 626.6 559 Z" fill="url(#wy)"/></svg>
<div class="t" style="left:650px;top:545.72px;font-size:10.25px;color:#666666;font-weight:400;">Microsoft Windows Server 2016 (64-bit)</div>
<div class="t" style="left:618.7px;top:575.34px;font-size:9.9px;color:#666666;font-weight:400;">Running, version:12320 (Current)</div>
<svg style="position:absolute;left:770px;top:574px;" width="14" height="14" viewBox="770 574 14 14"><circle cx="777" cy="581" r="5.4" fill="none" stroke="#0079b8" stroke-width="1.1"/><rect x="776.4" y="579.6" width="1.2" height="4" fill="#0079b8"/><circle cx="777" cy="578" r="0.75" fill="#0079b8"/></svg>
<svg style="position:absolute;left:618px;top:597px;" width="93.2" height="12" viewBox="0 0 93.2 12"><rect x="0.00" y="0" width="5.9" height="6" fill="#ececec"/><rect x="5.83" y="0" width="5.9" height="6" fill="#e8e8e8"/><rect x="11.66" y="0" width="5.9" height="6" fill="#eaeaea"/><rect x="17.49" y="0" width="5.9" height="6" fill="#f2f2f2"/><rect x="23.32" y="0" width="5.9" height="6" fill="#f2f2f2"/><rect x="29.15" y="0" width="5.9" height="6" fill="#ececec"/><rect x="34.98" y="0" width="5.9" height="6" fill="#f0f0f0"/><rect x="40.81" y="0" width="5.9" height="6" fill="#eeeeee"/><rect x="46.64" y="0" width="5.9" height="6" fill="#ececec"/><rect x="52.47" y="0" width="5.9" height="6" fill="#f2f2f2"/><rect x="58.30" y="0" width="5.9" height="6" fill="#f0f0f0"/><rect x="64.13" y="0" width="5.9" height="6" fill="#eeeeee"/><rect x="69.96" y="0" width="5.9" height="6" fill="#e8e8e8"/><rect x="75.79" y="0" width="5.9" height="6" fill="#ededed"/><rect x="81.62" y="0" width="5.9" height="6" fill="#f0f0f0"/><rect x="87.45" y="0" width="5.9" height="6" fill="#ececec"/><rect x="0.00" y="6" width="5.9" height="6" fill="#d8d8d8"/><rect x="5.83" y="6" width="5.9" height="6" fill="#d2d4d4"/><rect x="11.66" y="6" width="5.9" height="6" fill="#d4d4d4"/><rect x="17.49" y="6" width="5.9" height="6" fill="#e2e2e4"/><rect x="23.32" y="6" width="5.9" height="6" fill="#e0e0e0"/><rect x="29.15" y="6" width="5.9" height="6" fill="#d0d2d2"/><rect x="34.98" y="6" width="5.9" height="6" fill="#dedede"/><rect x="40.81" y="6" width="5.9" height="6" fill="#d8d8d8"/><rect x="46.64" y="6" width="5.9" height="6" fill="#dadada"/><rect x="52.47" y="6" width="5.9" height="6" fill="#e2e2e2"/><rect x="58.30" y="6" width="5.9" height="6" fill="#e4e4e4"/><rect x="64.13" y="6" width="5.9" height="6" fill="#e4e4e4"/><rect x="69.96" y="6" width="5.9" height="6" fill="#cfcfcf"/><rect x="75.79" y="6" width="5.9" height="6" fill="#d6d6d8"/><rect x="81.62" y="6" width="5.9" height="6" fill="#dad6d6"/><rect x="87.45" y="6" width="5.9" height="6" fill="#d8d8da"/></svg>
<div class="t" style="left:618.7px;top:647.16px;font-size:10.65px;color:#666666;font-weight:400;">Not encrypted</div>
<svg style="position:absolute;left:281px;top:518px" width="194" height="126" viewBox="28.2 22.5 1093.6 710.3" preserveAspectRatio="none"><defs><linearGradient id="sky" x1="0.8" y1="0" x2="0.2" y2="1"><stop offset="0" stop-color="#1550a8"/><stop offset="0.45" stop-color="#2c78c8"/><stop offset="1" stop-color="#8cc2e6"/></linearGradient><linearGradient id="sand" x1="0" y1="0" x2="0" y2="1"><stop offset="0" stop-color="#c29463"/><stop offset="0.55" stop-color="#a87a4a"/><stop offset="1" stop-color="#6a4b2b"/></linearGradient><linearGradient id="wall" x1="0" y1="0" x2="0.15" y2="1"><stop offset="0" stop-color="#120c06" stop-opacity="0"/><stop offset="0.2" stop-color="#2a1e10" stop-opacity="0.85"/><stop offset="0.45" stop-color="#87683a"/><stop offset="0.75" stop-color="#94733f"/><stop offset="1" stop-color="#5a4426"/></linearGradient><radialGradient id="arch" cx="0.85" cy="0.2" r="0.7"><stop offset="0" stop-color="#3e2c1a"/><stop offset="0.6" stop-color="#1a120a"/><stop offset="1" stop-color="#000"/></radialGradient><linearGradient id="sea" x1="0" y1="0" x2="0" y2="1"><stop offset="0" stop-color="#6a9ab0"/><stop offset="1" stop-color="#3d5a64"/></linearGradient></defs><rect x="28.2" y="22.5" width="1093.6" height="710.3" fill="#cfcfcf"/><rect x="35" y="40" width="1085" height="690" fill="#000"/><path d="M190 355 C240 322 320 300 430 290 C520 280 570 230 630 180 C680 140 730 122 790 132 C860 150 905 215 930 285 C948 340 948 400 935 440 L290 440 C275 400 240 370 190 355 Z" fill="url(#sky)"/><g fill="#e6eef6" opacity="0.8"><ellipse cx="630" cy="215" rx="35" ry="25"/><ellipse cx="665" cy="245" rx="40" ry="20"/><ellipse cx="700" cy="270" rx="40" ry="12"/><ellipse cx="590" cy="240" rx="25" ry="12"/></g><ellipse cx="635" cy="295" rx="18" ry="10" fill="#d5e4f2" opacity="0.75"/><ellipse cx="690" cy="295" rx="15" ry="7" fill="#d5e4f2" opacity="0.55"/><ellipse cx="915" cy="355" rx="30" ry="16" fill="#dbe8f3" opacity="0.8"/><ellipse cx="600" cy="365" rx="30" ry="6" fill="#d5e4f2" opacity="0.45"/><ellipse cx="800" cy="410" rx="30" ry="8" fill="#d5e4f2" opacity="0.4"/><rect x="285" y="438" width="650" height="50" fill="url(#sea)"/><rect x="285" y="452" width="650" height="8" fill="#a9c6cf" opacity="0.55"/><path d="M400 440 C410 420 415 380 435 370 C455 368 470 395 505 410 L505 440 Z" fill="#8f7758"/><path d="M605 440 C620 400 640 350 680 345 C720 350 740 400 770 425 L770 440 Z" fill="#827648"/><path d="M640 362 C660 348 690 345 702 356 L692 378 C670 372 650 372 640 362 Z" fill="#6e7c3c"/><path d="M410 458 L505 458 L505 485 L410 485 Z" fill="#4e4a3e" opacity="0.7"/><path d="M610 458 L770 458 L770 480 L610 480 Z" fill="#5c5540" opacity="0.7"/><path d="M290 480 C500 475 750 470 930 470 L1120 495 L1120 612 C900 620 700 640 530 655 C480 580 400 510 290 480 Z" fill="url(#sand)"/><path d="M35 40 L1120 40 L1120 100 C1000 80 860 80 790 132 C730 122 680 140 630 180 C570 230 520 280 430 290 C320 300 240 322 190 355 C160 330 35 300 35 300 Z" fill="url(#arch)"/><path d="M713 129 C780 120 850 150 880 189 C910 225 930 260 940 355 C945 400 935 440 918 504 C980 515 1050 520 1120 520 L1120 40 L640 40 C670 80 700 110 713 129 Z" fill="url(#wall)"/><path d="M900 200 C960 260 990 330 960 420 M1010 170 C1060 240 1090 320 1050 470 M1090 200 C1110 300 1100 380 1080 470" stroke="#3c2c16" stroke-width="16" fill="none" opacity="0.18"/><path d="M940 470 C960 500 990 510 1010 505" stroke="#7a8a3a" stroke-width="10" fill="none" opacity="0.5"/><path d="M35 300 C120 330 160 340 190 355 C240 370 275 400 290 460 C330 500 470 560 530 650 L530 730 L35 730 Z" fill="#000"/><path d="M530 655 C700 640 900 618 1120 608 L1120 730 L530 730 Z" fill="#060504"/><text x="60" y="582" font-family="Liberation Sans" font-size="86" fill="#f2f2f2" textLength="175" lengthAdjust="spacingAndGlyphs">9:42</text><text x="60" y="650" font-family="Liberation Sans" font-size="44" fill="#e0e0e0" textLength="288" lengthAdjust="spacingAndGlyphs">Friday, May 12</text><rect x="60" y="460" width="230" height="6" fill="#8a8a8a" opacity="0.6"/><rect x="1075" y="705" width="14" height="12" fill="#aaa"/></svg>
<div style="position:absolute;left:281px;top:653.3px;width:170px;height:17.2px;border:1px solid #0079b8;border-radius:2px;box-sizing:border-box;background:#fff"></div>
<div class="t" style="left:304.4px;top:657.20px;font-size:8.62px;color:#0079b8;font-weight:400;letter-spacing:0.2px;-webkit-text-stroke:0.25px currentColor">LAUNCH REMOTE CONSOLE</div>
<svg style="position:absolute;left:460px;top:655px;" width="14" height="14" viewBox="460 655 14 14"><circle cx="467.3" cy="661.8" r="5.6" fill="none" stroke="#0079b8" stroke-width="1.1"/><rect x="466.7" y="660.4" width="1.2" height="4" fill="#0079b8"/><circle cx="467.3" cy="658.8" r="0.75" fill="#0079b8"/></svg>
<div style="position:absolute;left:281px;top:679px;width:170px;height:17px;background:#0079b8;border-radius:2px"></div>
<div class="t" style="left:312.4px;top:682.66px;font-size:8.77px;color:#ffffff;font-weight:400;letter-spacing:0.2px;-webkit-text-stroke:0.25px currentColor">LAUNCH WEB CONSOLE</div>
<div style="position:absolute;left:0px;top:735px;width:1400px;height:2px;background:#e3e3e3"></div>
<div style="position:absolute;left:0px;top:737px;width:1400px;height:25.5px;background:#f7f7f7"></div>
<div style="position:absolute;left:0px;top:762.3px;width:1400px;height:1px;background:#d6d6d6"></div>
<div style="position:absolute;left:0px;top:763.3px;width:1400px;height:4px;background:#ffffff"></div>
<svg style="position:absolute;left:8px;top:744px;" width="18" height="10" viewBox="8 744 18 10"><path d="M12.2 751.8 L16.6 747.6 L21 751.8" fill="none" stroke="#555" stroke-width="1.4"/></svg>
<div style="position:absolute;left:33px;top:737px;width:1px;height:25px;background:#dddddd"></div>
<div class="t" style="left:48.6px;top:744.58px;font-size:10.74px;color:#313131;font-weight:400;">Recent Tasks</div>
<div class="t" style="left:137px;top:744.70px;font-size:10.61px;color:#666666;font-weight:400;">Alarms</div>
</body></html>
